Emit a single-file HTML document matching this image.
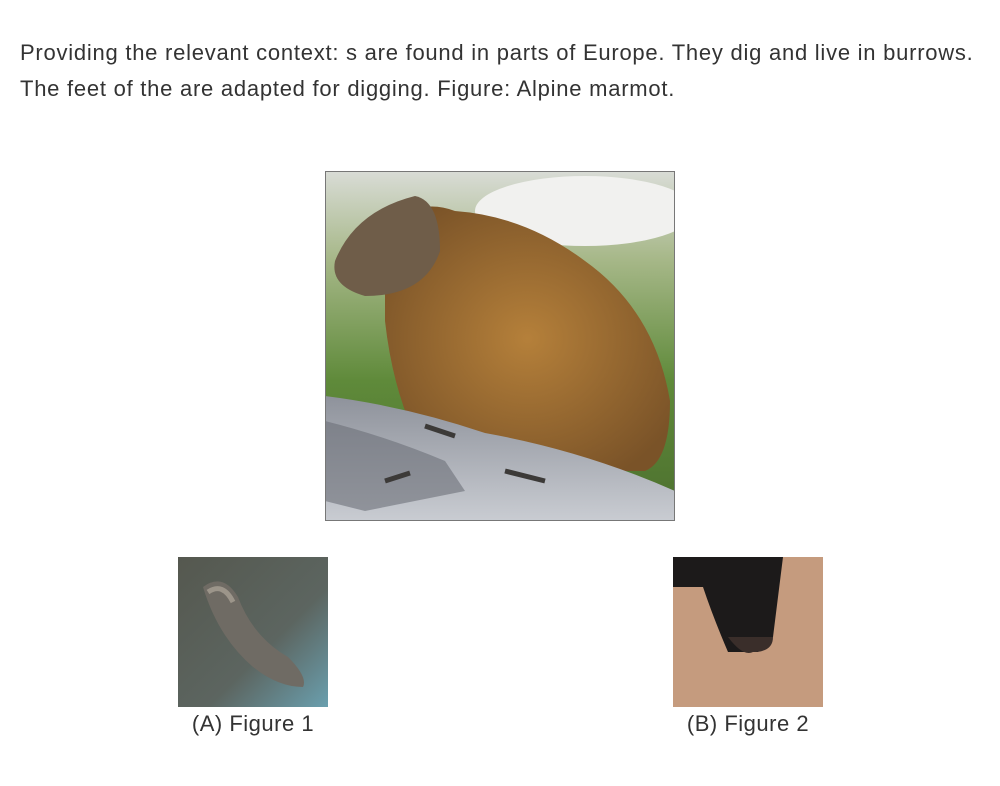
<!DOCTYPE html>
<html><head><meta charset="utf-8"><style>
body{margin:0;background:#fff;width:1000px;height:786px;overflow:hidden;font-family:"Liberation Sans","DejaVu Sans",sans-serif;color:#333}
.t{position:absolute;left:20px;top:35px;font-size:22px;letter-spacing:0.75px;line-height:36px;width:990px;white-space:nowrap}
.img{position:absolute}
.cap{position:absolute;font-size:22px;letter-spacing:0.5px;color:#333;width:200px;text-align:center}
</style></head><body>
<div class="t">Providing the relevant context: s are found in parts of Europe. They dig and live in burrows.<br>The feet of the are adapted for digging. Figure: Alpine marmot.</div>

<svg class="img" style="left:325px;top:171px" width="350" height="350" viewBox="0 0 350 350">
<defs>
<linearGradient id="bg" x1="0" y1="0" x2="0" y2="1"><stop offset="0" stop-color="#d9dcd6"/><stop offset="0.25" stop-color="#a7b889"/><stop offset="0.6" stop-color="#5f8a3a"/><stop offset="1" stop-color="#4c6f2e"/></linearGradient>
<radialGradient id="body" cx="0.5" cy="0.5" r="0.6"><stop offset="0" stop-color="#b5803a"/><stop offset="1" stop-color="#7a5328"/></radialGradient>
<linearGradient id="rock" x1="0" y1="0" x2="0" y2="1"><stop offset="0" stop-color="#8e929b"/><stop offset="1" stop-color="#c9ccd2"/></linearGradient>
</defs>
<rect width="350" height="350" fill="url(#bg)"/>
<ellipse cx="260" cy="40" rx="110" ry="35" fill="#f1f1ef"/>
<path d="M60 60 Q90 25 130 40 Q200 45 260 90 Q330 140 345 230 Q345 290 320 300 L110 300 Q70 240 60 150 Z" fill="url(#body)"/>
<path d="M10 90 Q30 40 90 25 Q115 30 115 80 Q100 125 40 125 Q5 115 10 90Z" fill="#6f5d49"/>
<path d="M0 225 Q80 235 160 262 Q260 280 350 320 L350 350 L0 350Z" fill="url(#rock)"/>
<path d="M0 250 Q60 265 120 290 L140 320 L40 340 L0 330Z" fill="#6d7078" opacity="0.6"/>
<path d="M100 255 l30 10 M180 300 l40 10 M60 310 l25 -8" stroke="#3c3a38" stroke-width="5"/>
<rect x="0.5" y="0.5" width="349" height="349" fill="none" stroke="#777"/>
</svg>

<svg class="img" style="left:178px;top:557px" width="150" height="150" viewBox="0 0 150 150">
<defs><linearGradient id="a" x1="0" y1="0" x2="1" y2="1"><stop offset="0" stop-color="#55584f"/><stop offset="0.6" stop-color="#5c6560"/><stop offset="1" stop-color="#6a9fae"/></linearGradient></defs>
<rect width="150" height="150" fill="url(#a)"/>
<path d="M25 30 Q45 15 60 40 Q75 80 110 100 Q130 120 125 130 Q100 130 75 110 Q40 80 25 30Z" fill="#6f6b64"/>
<path d="M30 35 Q45 25 55 45" stroke="#9c958a" stroke-width="5" fill="none"/>
</svg>
<div class="cap" style="left:153px;top:711px">(A) Figure 1</div>

<svg class="img" style="left:673px;top:557px" width="150" height="150" viewBox="0 0 150 150">
<rect width="150" height="150" fill="#c59b7e"/>
<path d="M0 0 L110 0 Q105 40 100 80 L85 95 L55 95 Q40 60 30 30 L0 30Z" fill="#1c1a1a"/>
<path d="M55 80 Q70 100 80 95 Q100 95 100 80" fill="#3a2e2a"/>
</svg>
<div class="cap" style="left:648px;top:711px">(B) Figure 2</div>
</body></html>
